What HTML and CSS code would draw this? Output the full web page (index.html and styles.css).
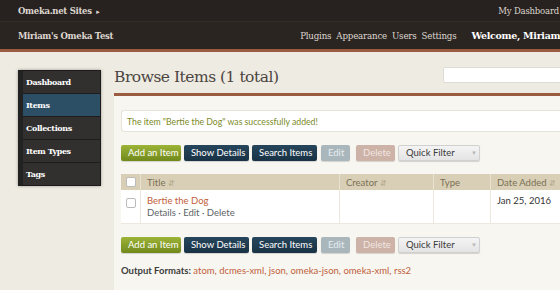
FILE: index.html
```html
<!DOCTYPE html>
<html lang="en">
<head>
  <meta charset="UTF-8">
  <meta name="viewport" content="width=device-width, initial-scale=1.0">
  <title>Browse Items · Miriam's Omeka Test</title>
  <link rel="stylesheet" href="styles.css">
</head>
<body>
  <header class="site-bar">
    <span class="sites">Omeka.net Sites <span class="caret">&#9656;</span></span>
    <span class="dash">My Dashboard</span>
  </header>
  <div class="admin-bar">
    <span class="site-title">Miriam's Omeka Test</span>
    <nav class="admin-nav">
      <a>Plugins</a>
      <a>Appearance</a>
      <a>Users</a>
      <a>Settings</a>
    </nav>
    <span class="welcome">Welcome, Miriam Posner</span>
  </div>

  <div class="layout">
    <ul class="sidebar">
      <li>Dashboard</li>
      <li class="active">Items</li>
      <li>Collections</li>
      <li>Item Types</li>
      <li>Tags</li>
    </ul>

    <main class="content">
      <div class="title-row">
        <h1>Browse Items (1 total)</h1>
        <input type="text" class="search">
      </div>

      <div class="panel">
        <div class="flash">The item "Bertie the Dog" was successfully added!</div>

        <div class="actions">
          <span class="btn green">Add an Item</span>
          <span class="btn navy">Show Details</span>
          <span class="btn navy">Search Items</span>
          <span class="btn grey">Edit</span>
          <span class="btn pink">Delete</span>
          <span class="btn filter">Quick Filter <span class="arrow">&#9660;</span></span>
        </div>

        <table class="items">
          <thead>
            <tr>
              <th class="cb"><span class="box"></span></th>
              <th class="c-title">Title <span class="sort">&#8693;</span></th>
              <th class="c-creator">Creator <span class="sort">&#8693;</span></th>
              <th class="c-type">Type</th>
              <th class="c-date">Date Added <span class="sort">&#8693;</span></th>
            </tr>
          </thead>
          <tbody>
            <tr>
              <td class="cb"><span class="box"></span></td>
              <td>
                <a class="item-link">Bertie the Dog</a>
                <div class="row-links">Details · Edit · Delete</div>
              </td>
              <td></td>
              <td></td>
              <td>Jan 25, 2016</td>
            </tr>
          </tbody>
        </table>

        <div class="actions">
          <span class="btn green">Add an Item</span>
          <span class="btn navy">Show Details</span>
          <span class="btn navy">Search Items</span>
          <span class="btn grey">Edit</span>
          <span class="btn pink">Delete</span>
          <span class="btn filter">Quick Filter <span class="arrow">&#9660;</span></span>
        </div>

        <p class="formats">
          <b>Output Formats:</b>
          <a>atom</a>, <a>dcmes-xml</a>, <a>json</a>, <a>omeka-json</a>, <a>omeka-xml</a>, <a>rss2</a>
        </p>
      </div>
    </main>
  </div>
</body>
</html>
```

FILE: styles.css
```css
body {
  margin: 0;
  padding: 0;
  width: 560px;
  height: 290px;
  overflow: hidden;
  background: #eeebe2;
  font-family: 'Lato', sans-serif;
  color: #333;
}

a {
  cursor: pointer;
}

/* top bars */
.site-bar,
.admin-bar {
  display: flex;
  align-items: center;
  white-space: nowrap;
  font-family: 'DejaVu Serif', serif;
  font-weight: bold;
  font-size: 8.5px;
  letter-spacing: -0.3px;
  color: #ddd6cf;
  padding-left: 18px;
  overflow: hidden;
}

.site-bar {
  height: 21px;
  background: #27221f;
  border-bottom: 1px solid #332d29;
}

.sites .caret {
  font-size: 7px;
  margin-left: 2px;
}

.dash {
  margin-left: auto;
  margin-right: 1px;
  font-weight: normal;
  letter-spacing: -0.2px;
}

.admin-bar {
  height: 27px;
  background: #2b2522;
  border-bottom: 3px solid #9a5b40;
}

.admin-nav {
  display: flex;
  gap: 5px;
  margin-left: auto;
  font-weight: normal;
  font-size: 8.7px;
  letter-spacing: -0.2px;
}

.welcome {
  margin-left: 15px;
  margin-right: -38px;
  font-size: 9.5px;
  color: #fff;
}

/* layout */
.layout {
  display: flex;
  gap: 13px;
  padding: 18px 0 0 18px;
}

.sidebar {
  list-style: none;
  margin: 0;
  padding: 0;
  width: 83px;
  flex-shrink: 0;
  align-self: flex-start;
  background: #32302f;
  border: 1px solid #1d1b1a;
  border-left: 5px solid #222;
  box-sizing: border-box;
  box-shadow: 0 0 3px rgba(0, 0, 0, 0.35);
}

.sidebar li {
  height: 22px;
  line-height: 22px;
  padding-left: 3px;
  border-bottom: 1px solid #1f1d1c;
  font-family: 'DejaVu Serif', serif;
  font-weight: bold;
  font-size: 8px;
  letter-spacing: -0.4px;
  color: #fff;
}

.sidebar li:last-child {
  border-bottom: none;
}

.sidebar li.active {
  background: #2d4f66;
}

.content {
  flex: 1;
  min-width: 0;
}

.title-row {
  display: flex;
  align-items: flex-start;
  height: 23px;
}

h1 {
  margin: 0;
  font-family: 'DejaVu Serif', serif;
  font-weight: normal;
  font-size: 15.5px;
  letter-spacing: -0.5px;
  line-height: 14px;
  color: #4b4541;
  white-space: nowrap;
}

.search {
  margin-left: auto;
  margin-right: -30px;
  margin-top: -3px;
  width: 147px;
  height: 16px;
  border: 1px solid #dedcd5;
  border-radius: 2px;
  box-sizing: border-box;
  background: #fff;
}

.panel {
  border-top: 3px solid #9a5b40;
  background: #f7f6f1;
  padding: 14px 0 20px 7px;
  min-height: 200px;
}

.flash {
  height: 22px;
  line-height: 22px;
  padding-left: 5px;
  background: #fff;
  border: 1px solid #e6e3da;
  border-right: none;
  border-radius: 3px 0 0 3px;
  box-sizing: border-box;
  font-size: 8.7px;
  color: #7b8a27;
  white-space: nowrap;
}

/* buttons */
.actions {
  display: flex;
  gap: 3px;
  margin-top: 13px;
}

.btn {
  height: 16px;
  line-height: 16px;
  padding: 0 7px;
  border-radius: 2px;
  font-size: 9.5px;
  color: #fff;
  white-space: nowrap;
  box-shadow: 0 1px 1px rgba(0, 0, 0, 0.15);
}

.btn.green {
  background: linear-gradient(#9cb437, #71891b);
  width: 46px;
}

.btn.navy {
  background: linear-gradient(#26465c, #193245);
  width: 51px;
}

.btn.grey {
  background: #a9b7bd;
  color: #e7ecee;
  margin-left: 1px;
  width: 15px;
}

.btn.pink {
  background: #cdb2a7;
  color: #f1e6e2;
  margin-left: 3px;
  width: 25px;
}

.btn.filter {
  background: linear-gradient(#f4f4f4, #e4e4e4);
  border: 1px solid #d0d0d0;
  height: 14px;
  line-height: 14px;
  color: #3a3a3a;
  width: 66px;
}

.btn .arrow {
  color: #b8b8b8;
  font-size: 6px;
  margin-left: 14px;
  vertical-align: 1px;
}

/* table */
.items {
  width: 470px;
  margin-top: 13px;
  border-collapse: collapse;
  font-size: 9.5px;
}

.items th {
  height: 16px;
  padding: 0 0 0 6px;
  background: #d8cfb6;
  color: #7b6f55;
  font-weight: normal;
  text-align: left;
  border-left: 1px solid #e8e2d1;
}

.items td {
  height: 33px;
  padding: 0 0 0 6px;
  background: #fff;
  vertical-align: top;
  border-left: 1px solid #ece8dd;
  border-bottom: 1px solid #ece8dd;
}

.items td:first-child,
.items th:first-child {
  border-left: none;
}

.items .cb {
  width: 14px;
  padding: 0 0 0 5px;
}

.items th.cb {
  vertical-align: middle;
}

.items td.cb {
  padding-top: 8px;
  height: 25px;
}

.items td:nth-child(2),
.items td:nth-child(5) {
  padding-top: 5px;
  height: 28px;
}

.c-title {
  width: 192px;
}

.c-creator {
  width: 87px;
}

.c-type {
  width: 50px;
}

.box {
  display: block;
  width: 8px;
  height: 8px;
  background: #fff;
  border: 1px solid #bbb;
  border-radius: 2px;
}

.sort {
  color: #b6ab8e;
  font-size: 8px;
}

.item-link {
  color: #c1603b;
}

.row-links {
  color: #5d6366;
  margin-top: 1px;
}

.formats {
  margin: 12px 0 0;
  font-size: 9.5px;
  color: #c1603b;
}

.formats b {
  color: #3c3c3c;
}
```
